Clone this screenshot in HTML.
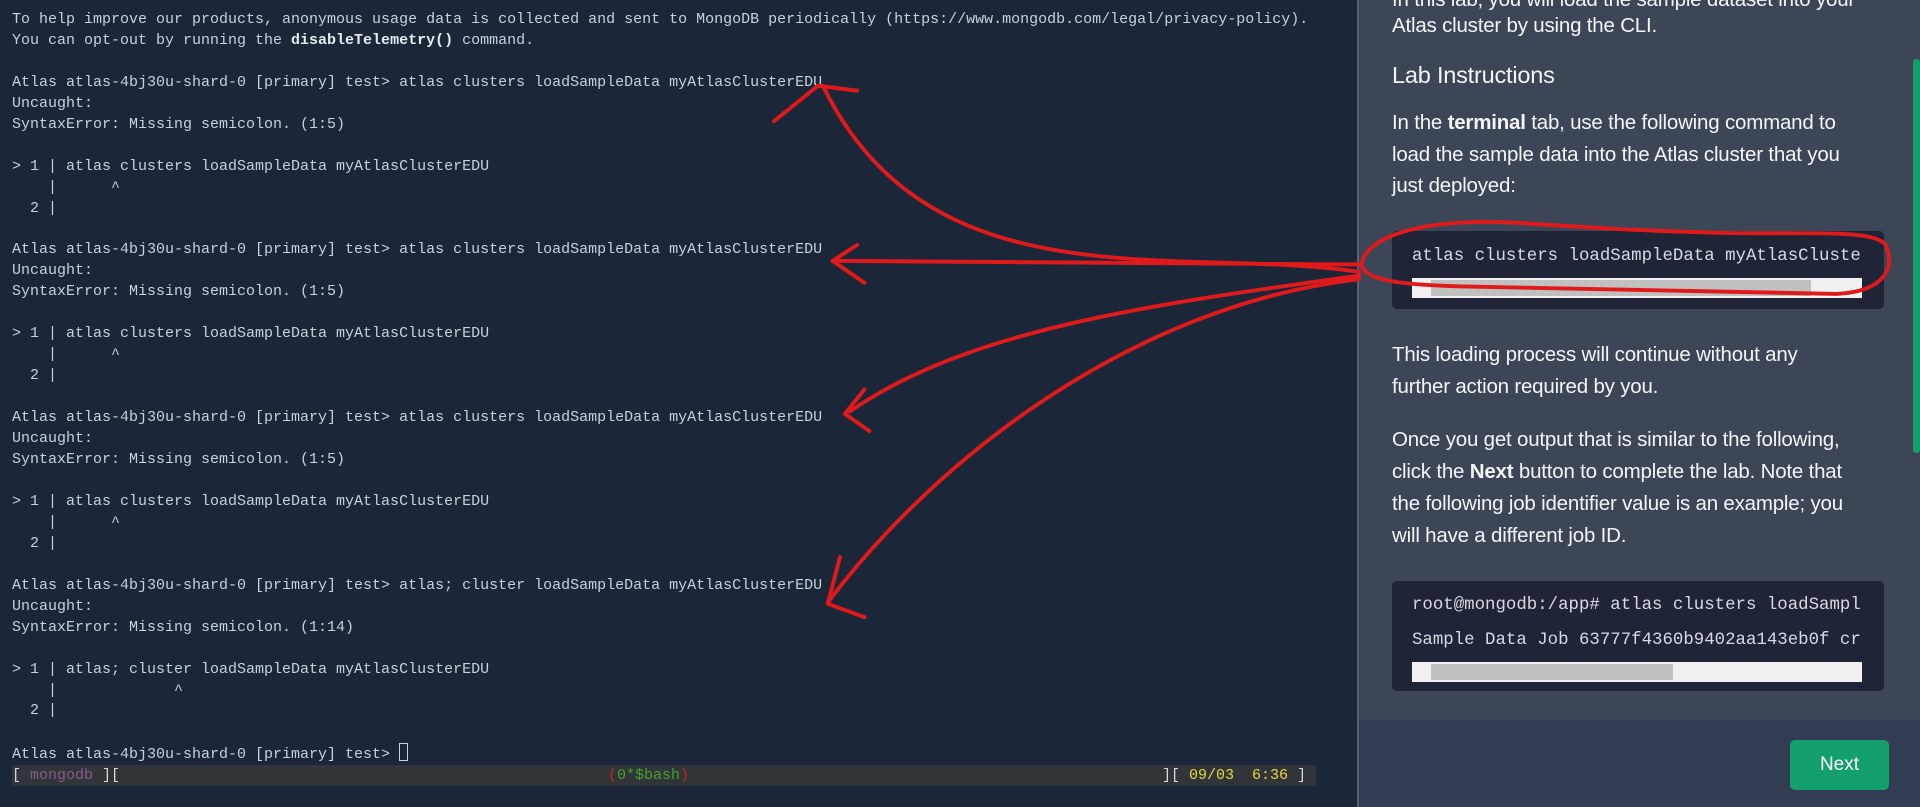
<!DOCTYPE html>
<html><head><meta charset="utf-8"><style>
*{margin:0;padding:0;box-sizing:border-box}
body{width:1920px;height:807px;overflow:hidden;background:#1b2638;position:relative;font-family:"Liberation Sans",sans-serif}
#term{position:absolute;left:0;top:0;width:1357px;height:807px;background:#1b2638;color:#c8d0dc;font-family:"Liberation Mono",monospace;font-size:15px;line-height:20.95px;padding:10px 0 0 12px;white-space:pre}
#term b{color:#e6ebf2}
#status{position:absolute;left:12px;top:765px;width:1304px;height:21px;background:#2f3538;font-family:"Liberation Mono",monospace;font-size:15px;line-height:21px;color:#d8d8d8;white-space:pre}
#panel{position:absolute;left:1357px;top:0;width:563px;height:720px;background:#3c4657;border-left:2px solid #56607a;color:#f4f6f8}
.t{position:absolute;left:33px;font-size:20.5px;white-space:nowrap;letter-spacing:-0.2px}
.code{position:absolute;left:33px;width:492px;background:#1f2437;border-radius:5px;font-family:"Liberation Mono",monospace;font-size:17.4px;color:#d6dae0;overflow:hidden}
.code div{position:absolute;left:20px;white-space:nowrap}
.sb{position:absolute;left:20px;width:450px;height:20px;background:#f1f1f1}
.sb i{position:absolute;left:19px;top:2px;height:16px;background:#c0c0c0}
#foot{position:absolute;left:1357px;top:720px;width:563px;height:87px;background:#323c52;border-left:2px solid #56607a}
#next{position:absolute;left:1790px;top:740px;width:99px;height:50px;background:#13a06d;border-radius:5px;color:#fff;font-size:19px;text-align:center;line-height:50px}
#gs{position:absolute;left:1913px;top:59px;width:7px;height:394px;background:#13a06d;border-radius:4px}
</style></head><body>
<div id="term">To help improve our products, anonymous usage data is collected and sent to MongoDB periodically (https://www.mongodb.com/legal/privacy-policy).
You can opt-out by running the <b>disableTelemetry()</b> command.

Atlas atlas-4bj30u-shard-0 [primary] test&gt; atlas clusters loadSampleData myAtlasClusterEDU
Uncaught:
SyntaxError: Missing semicolon. (1:5)

&gt; 1 | atlas clusters loadSampleData myAtlasClusterEDU
    |      ^
  2 |

Atlas atlas-4bj30u-shard-0 [primary] test&gt; atlas clusters loadSampleData myAtlasClusterEDU
Uncaught:
SyntaxError: Missing semicolon. (1:5)

&gt; 1 | atlas clusters loadSampleData myAtlasClusterEDU
    |      ^
  2 |

Atlas atlas-4bj30u-shard-0 [primary] test&gt; atlas clusters loadSampleData myAtlasClusterEDU
Uncaught:
SyntaxError: Missing semicolon. (1:5)

&gt; 1 | atlas clusters loadSampleData myAtlasClusterEDU
    |      ^
  2 |

Atlas atlas-4bj30u-shard-0 [primary] test&gt; atlas; cluster loadSampleData myAtlasClusterEDU
Uncaught:
SyntaxError: Missing semicolon. (1:14)

&gt; 1 | atlas; cluster loadSampleData myAtlasClusterEDU
    |             ^
  2 |

Atlas atlas-4bj30u-shard-0 [primary] test&gt; <span style="display:inline-block;width:9px;height:18px;border:1px solid #c8d0dc;vertical-align:-3px"></span></div>
<div id="status">[ <span style="color:#8a5a86">mongodb</span> ][<span style="position:absolute;left:596px"><span style="color:#d42020">(</span><span style="color:#4aa02a">0*$bash</span><span style="color:#d42020">)</span></span><span style="position:absolute;left:1150px">][ <span style="color:#e8d838">09/03  6:36</span> ]</span></div>
<div id="panel">
<div class="t" style="top:-12px">In this lab, you will load the sample dataset into your</div>
<div class="t" style="top:14px">Atlas cluster by using the CLI.</div>
<div class="t" style="top:62px;font-size:23.5px">Lab Instructions</div>
<div class="t" style="top:111px">In the <b>terminal</b> tab, use the following command to</div>
<div class="t" style="top:143px">load the sample data into the Atlas cluster that you</div>
<div class="t" style="top:174px">just deployed:</div>
<div class="code" style="top:231px;height:78px"><div style="top:16px">atlas clusters loadSampleData myAtlasCluste</div><span class="sb" style="top:47px"><i style="width:380px"></i></span></div>
<div class="t" style="top:343px">This loading process will continue without any</div>
<div class="t" style="top:375px">further action required by you.</div>
<div class="t" style="top:428px">Once you get output that is similar to the following,</div>
<div class="t" style="top:460px">click the <b>Next</b> button to complete the lab. Note that</div>
<div class="t" style="top:492px">the following job identifier value is an example; you</div>
<div class="t" style="top:524px">will have a different job ID.</div>
<div class="code" style="top:581px;height:110px"><div style="top:15px">root@mongodb:/app# atlas clusters loadSampl</div><div style="top:50px">Sample Data Job 63777f4360b9402aa143eb0f cr</div><span class="sb" style="top:81px"><i style="width:242px"></i></span></div>
</div>
<div id="foot"></div>
<div id="next">Next</div>
<div id="gs"></div>
<svg style="position:absolute;left:0;top:0" width="1920" height="807" viewBox="0 0 1568 659" fill="none" stroke="#e01a1a" stroke-width="3.2" stroke-linecap="round" stroke-linejoin="round">
<path d="M1110 222 C 960 200, 760 250, 672 70"/>
<path d="M632 99 L668 70 L700 74"/>
<path d="M1110 216 C 950 214, 800 214, 680 213"/>
<path d="M700 200 L680 213 L706 231"/>
<path d="M1110 225 C 930 250, 790 270, 694 336"/>
<path d="M706 318 L690 338 L710 352"/>
<path d="M1110 228 C 920 250, 760 380, 676 492"/>
<path d="M686 455 L676 493 L706 504"/>
<path d="M1112 215 C 1118 190, 1170 178, 1240 182 C 1300 186, 1330 188, 1400 190 C 1470 192, 1530 186, 1540 200 C 1548 218, 1540 238, 1500 240 C 1400 238, 1300 236, 1200 234 C 1150 233, 1112 230, 1112 215 Z"/>
</svg>
</body></html>
